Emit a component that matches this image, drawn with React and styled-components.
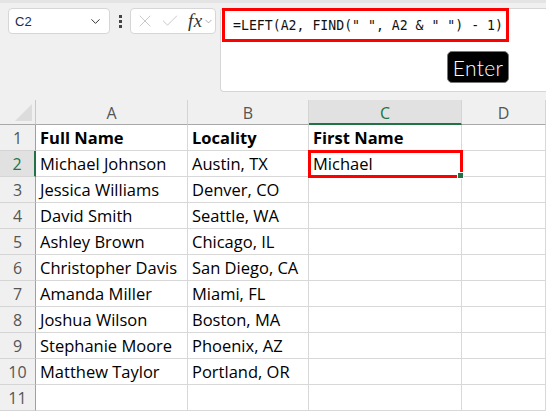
import React from "react";
import styled, { createGlobalStyle } from "styled-components";
import { ChevronDown, X, Check } from "lucide-react";

const GlobalStyle = createGlobalStyle`
  body {
    margin: 0;
    background: #fff;
    font-family: "Open Sans", "Noto Sans", sans-serif;
  }
`;

const Page = styled.div`
  width: 546px;
  height: 412px;
  overflow: hidden;
  display: flex;
  flex-direction: column;
`;

const TopBar = styled.div`
  height: 100px;
  box-sizing: border-box;
  background: #f0f0f0;
  border-top: 3px solid #e4e4e4;
  padding: 5px 0 0 8px;
  display: flex;
  align-items: flex-start;
`;

const NameBox = styled.div`
  width: 102px;
  height: 26px;
  box-sizing: border-box;
  background: #fff;
  border: 1px solid #d6d6d6;
  border-radius: 4px;
  display: flex;
  align-items: center;
  justify-content: space-between;
  padding: 0 6px;
  font-family: "Liberation Sans", Arial, sans-serif;
  font-size: 13px;
  color: #1c2b4a;
`;

const Dots = styled.div`
  width: 20px;
  height: 26px;
  display: flex;
  flex-direction: column;
  align-items: center;
  justify-content: center;
  gap: 2px;
  span {
    width: 3px;
    height: 3px;
    background: #444;
  }
`;

const FxBox = styled.div`
  width: 86px;
  height: 26px;
  box-sizing: border-box;
  background: #fff;
  border: 1px solid #d6d6d6;
  border-radius: 4px;
  display: flex;
  align-items: center;
  padding-left: 4px;
  gap: 5px;
  color: #c4c4c4;
`;

const FxLabel = styled.span`
  font-family: "Liberation Serif", serif;
  font-style: italic;
  font-size: 19px;
  color: #333;
  margin-left: 3px;
  letter-spacing: 0.5px;
`;

const FormulaInput = styled.div`
  position: relative;
  margin-left: 4px;
  flex: 1;
  height: 84px;
  box-sizing: border-box;
  background: #fff;
  border: 1px solid #d6d6d6;
  border-right: none;
  border-radius: 4px 0 0 4px;
`;

const FormulaText = styled.div`
  width: 287px;
  height: 34px;
  box-sizing: border-box;
  margin: -1px 0 0 1px;
  border: 3px solid #ff0000;
  display: flex;
  align-items: center;
  padding-left: 8px;
  font-family: "DejaVu Sans Mono", "Liberation Mono", monospace;
  font-size: 13.2px;
  color: #111;
  white-space: pre;
`;

const KeyBadge = styled.div`
  position: absolute;
  left: 226px;
  top: 42px;
  width: 62px;
  height: 32px;
  box-sizing: border-box;
  background: #000;
  border: 1px solid #777;
  border-radius: 5px;
  color: #fff;
  font-family: Lato, sans-serif;
  font-weight: 300;
  font-size: 21px;
  letter-spacing: 0.3px;
  display: flex;
  align-items: center;
  justify-content: center;
`;

const Grid = styled.div`
  display: grid;
  grid-template-columns: 36px 152px 121px 153px 1fr;
  grid-template-rows: 25px;
  grid-auto-rows: 26px;
`;

const Corner = styled.div`
  background: #f0f0f0;
  border-right: 1px solid #c8c8c8;
  border-bottom: 1px solid #a8a8a8;
  box-sizing: border-box;
  position: relative;
  &::after {
    content: "";
    position: absolute;
    right: 3px;
    bottom: 3px;
    border-style: solid;
    border-width: 0 0 17px 17px;
    border-color: transparent transparent #dcdcdc transparent;
  }
`;

const ColHead = styled.div`
  box-sizing: border-box;
  background: ${(p) => (p.$active ? "#e1e1e1" : "#f0f0f0")};
  border-right: 1px solid #d4d4d4;
  border-bottom: ${(p) => (p.$active ? "2px solid #217346" : "1px solid #a8a8a8")};
  color: ${(p) => (p.$active ? "#217346" : "#555")};
  font-size: 16px;
  display: flex;
  align-items: center;
  justify-content: center;
  padding-top: 2px;
`;

const RowHead = styled.div`
  box-sizing: border-box;
  background: ${(p) => (p.$active ? "#e1e1e1" : "#f0f0f0")};
  border-right: ${(p) => (p.$active ? "2px solid #217346" : "1px solid #a0a0a0")};
  border-bottom: 1px solid #d4d4d4;
  color: ${(p) => (p.$active ? "#217346" : "#555")};
  font-size: 16px;
  display: flex;
  align-items: center;
  justify-content: center;
`;

const Cell = styled.div`
  position: relative;
  box-sizing: border-box;
  border-right: 1px solid #d8d8d8;
  border-bottom: 1px solid #d8d8d8;
  padding-left: 4px;
  display: flex;
  align-items: center;
  font-size: 16.5px;
  font-weight: ${(p) => (p.$bold ? 700 : 400)};
  color: #000;
  white-space: nowrap;
  overflow: hidden;
  ${(p) =>
    p.$selected &&
    `
    overflow: visible;
    outline: 3px solid #ff0000;
    outline-offset: -2px;
    z-index: 1;
  `}
`;

const FillHandle = styled.span`
  position: absolute;
  right: -3px;
  bottom: -3px;
  width: 5px;
  height: 5px;
  background: #217346;
  border: 1px solid #fff;
`;

const people = [
  ["Michael Johnson", "Austin, TX"],
  ["Jessica Williams", "Denver, CO"],
  ["David Smith", "Seattle, WA"],
  ["Ashley Brown", "Chicago, IL"],
  ["Christopher Davis", "San Diego, CA"],
  ["Amanda Miller", "Miami, FL"],
  ["Joshua Wilson", "Boston, MA"],
  ["Stephanie Moore", "Phoenix, AZ"],
  ["Matthew Taylor", "Portland, OR"],
];

const rows = [
  ["Full Name", "Locality", "First Name", ""],
  ...people.map(([n, l], i) => [n, l, i === 0 ? "Michael" : "", ""]),
  ["", "", "", ""],
];

export default function App() {
  return (
    <Page>
      <GlobalStyle />
      <TopBar>
        <NameBox>
          C2
          <ChevronDown size={15} strokeWidth={1.6} color="#333" />
        </NameBox>
        <Dots>
          <span />
          <span />
          <span />
        </Dots>
        <FxBox>
          <X size={20} strokeWidth={1.1} />
          <Check size={20} strokeWidth={1.1} />
          <FxLabel>fx</FxLabel>
          <ChevronDown size={11} strokeWidth={1.5} color="#888" style={{ marginLeft: -5 }} />
        </FxBox>
        <FormulaInput>
          <FormulaText>{'=LEFT(A2, FIND(" ", A2 & " ") - 1)'}</FormulaText>
          <KeyBadge>Enter</KeyBadge>
        </FormulaInput>
      </TopBar>
      <Grid>
        <Corner />
        {["A", "B", "C", "D"].map((c) => (
          <ColHead key={c} $active={c === "C"}>
            {c}
          </ColHead>
        ))}
        {rows.map((r, i) => (
          <React.Fragment key={i}>
            <RowHead $active={i === 1}>{i + 1}</RowHead>
            {r.map((v, j) => (
              <Cell key={j} $bold={i === 0} $selected={i === 1 && j === 2}>
                {v}
                {i === 1 && j === 2 && <FillHandle />}
              </Cell>
            ))}
          </React.Fragment>
        ))}
      </Grid>
    </Page>
  );
}
